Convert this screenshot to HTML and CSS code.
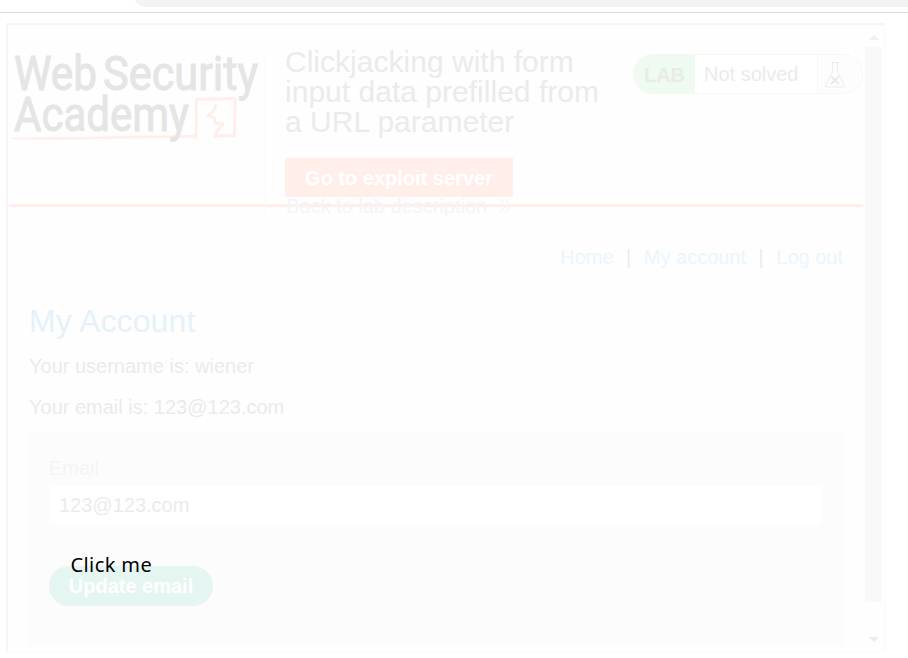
FILE: index.html
```
<!DOCTYPE html>
<html lang="en">
<head>
<meta charset="utf-8">
<title>Clickjacking</title>
<link rel="stylesheet" href="styles.css">
</head>
<body>
<div class="browser-bar"><div class="address"></div></div>
<main class="frame">
  <div class="page">
    <header class="header">
      <svg class="logo" width="255" height="150" viewBox="0 0 255 150">
        <path class="brush" d="M187 83.500 L187.500 45.500 L226 44.500 L225.500 81.500 L206 82 L209.500 75 L214.500 70 L206 69 L206 64 L199 62 L206 55 L206.500 51"/>
        <path class="stroke" d="M1 83.500 Q50 83.500 95 82.500 Q145 81 188 81 L188 83.500 Q145 84 95 85 Q50 86 4 85.500 Z"/>
        <text x="5" y="36" textLength="83" lengthAdjust="spacingAndGlyphs">Web</text>
        <text x="94" y="36" textLength="155" lengthAdjust="spacingAndGlyphs">Security</text>
        <text x="5" y="77" textLength="175" lengthAdjust="spacingAndGlyphs">Academy</text>
      </svg>
      <div class="details">
        <h2>Clickjacking with form<br>input data prefilled from<br>a URL parameter</h2>
        <a class="exploit">Go to exploit server</a>
        <a class="back">Back to lab description
          <svg width="16" height="18" viewBox="0 0 16 18"><path d="M1.500 2 L8 9 L1.500 16 M6.500 2 L13 9 L6.500 16"/></svg>
        </a>
      </div>
      <div class="status">
        <b>LAB</b><span>Not solved</span>
        <i><svg width="22" height="28" viewBox="0 0 22 28"><path d="M7 1.500 H15 M8.500 2 V11 L1.500 24 Q1 26 2.500 26 H19.500 Q21 26 20.500 24 L13.500 11 V2"/><path class="cross" d="M7 15.500 L15 23 M15 15.500 L7 23"/></svg></i>
      </div>
    </header>
    <section class="content">
      <nav><a>Home</a><span>|</span><a>My account</a><span>|</span><a>Log out</a></nav>
      <h1>My Account</h1>
      <p>Your username is: wiener</p>
      <p>Your email is: 123@123.com</p>
      <div class="form">
        <label>Email</label>
        <div class="field">123@123.com</div>
        <div class="submit">Update email</div>
      </div>
    </section>
  </div>
  <div class="scrollbar"><div class="arrow up"></div><div class="thumb"></div><div class="arrow down"></div></div>
</main>
<div class="decoy">Click me</div>
</body>
</html>
```
FILE: styles.css
```
* { box-sizing: border-box; }
body { margin: 0; height: 658px; overflow: hidden; background: #fff; font: 20px/23px "Liberation Sans", Arial, sans-serif; color: #ebebeb; }
.browser-bar { height: 13px; border-bottom: 1px solid #dadada; overflow: hidden; }
.address { height: 27px; margin: -20px -30px 0 133px; border-radius: 14px; background: #f1f3f4; }
.frame { display: flex; width: 880px; height: 630px; margin: 10px 0 0 6px; border: 2px solid; border-color: #f5f5f5 #fcfcfc #fcfcfc #f5f5f5; background: #fefefe; padding-left: 1px; }
.page { width: 854px; flex: none; }
.header { display: flex; align-items: flex-start; height: 182px; border-bottom: 3px solid #ffeeea; padding-top: 29px; }
.logo { flex: none; overflow: visible; }
.logo text { font: 400 48px Roboto, sans-serif; fill: #e5e5e5; stroke: #e5e5e5; stroke-width: 1; }
.brush { fill: none; stroke: #ffeeea; stroke-width: 2.800; stroke-linejoin: round; stroke-linecap: round; }
.stroke { fill: #ffeeea; }
.details { width: 349px; height: 165px; flex: none; border-left: 1px solid #fbfbfb; padding-left: 20px; position: relative; z-index: 1; }
h2 { margin: -7px 0 21px; font-weight: 400; font-size: 30px; line-height: 30px; white-space: nowrap; text-indent: 0; letter-spacing: .02px; }
.exploit { display: block; width: 228px; height: 39px; background: #ffeeea; color: #fff; font-weight: 700; line-height: 40px; text-align: center; }
.back { display: flex; align-items: center; gap: 11px; height: 18px; color: #f5f5f5; white-space: nowrap; padding-left: 1px; }
.back svg { fill: none; stroke: #f5f5f5; stroke-width: 1.2; }
.status { display: flex; flex: none; width: 230px; height: 40px; margin-left: 20px; border: 1px solid #effaf0; border-radius: 20px; overflow: hidden; line-height: 39px; background: #fff; }
.status b { width: 61px; background: #effaf0; color: #e9ebe9; text-align: center; line-height: 40px; }
.status span { flex: 1; padding-left: 9px; }
.status i { width: 45px; border-left: 1px solid #effaf0; background: #fdfdfd; padding: 6px 0 0 6px; line-height: 0; }
.status svg { fill: none; stroke: #ececec; stroke-width: 1; }
.status .cross { stroke: #e5e5e5; stroke-width: 1.500; }
.content { padding: 38px 20px 0; }
nav { display: flex; justify-content: flex-end; height: 23px; gap: 12.5px; color: #eaf6fd; line-height: 24px; }
nav span { color: #f2ebe8; }
h1 { margin: 35px 0 15px; font-size: 32px; line-height: 37px; font-weight: 400; color: #e5f2fa; letter-spacing: .1px; }
p { margin: 0 0 18px; line-height: 23px; }
.form { height: 214px; margin-top: -5px; padding: 25px 20px 0; background: #fcfcfc; }
label { display: block; height: 28px; color: #f5f5f5; }
.field { height: 40px; background: #fff; border: 1px solid #fdfdfd; padding-left: 9px; line-height: 38px; }
.submit { width: 164px; height: 40px; margin-top: 41px; border-radius: 20px; background: #e5f5f1; color: #fff; font-weight: 700; text-align: center; line-height: 40px; }
.scrollbar { width: 17px; margin-left: 2px; display: flex; flex-direction: column; align-items: center; }
.thumb { width: 17px; height: 555px; margin-top: 7px; background: #f9f9f9; }
.arrow { width: 0; height: 0; border: 5px solid transparent; }
.up { margin-top: 10px; border-top: 0; border-bottom-color: #f0f0f0; }
.down { margin-top: 35px; border-bottom: 0; border-top-color: #ebebeb; }
.decoy { position: absolute; left: 70.5px; top: 551px; color: #000; font: 20px/28px "Noto Sans", sans-serif; letter-spacing: .4px; }
```
